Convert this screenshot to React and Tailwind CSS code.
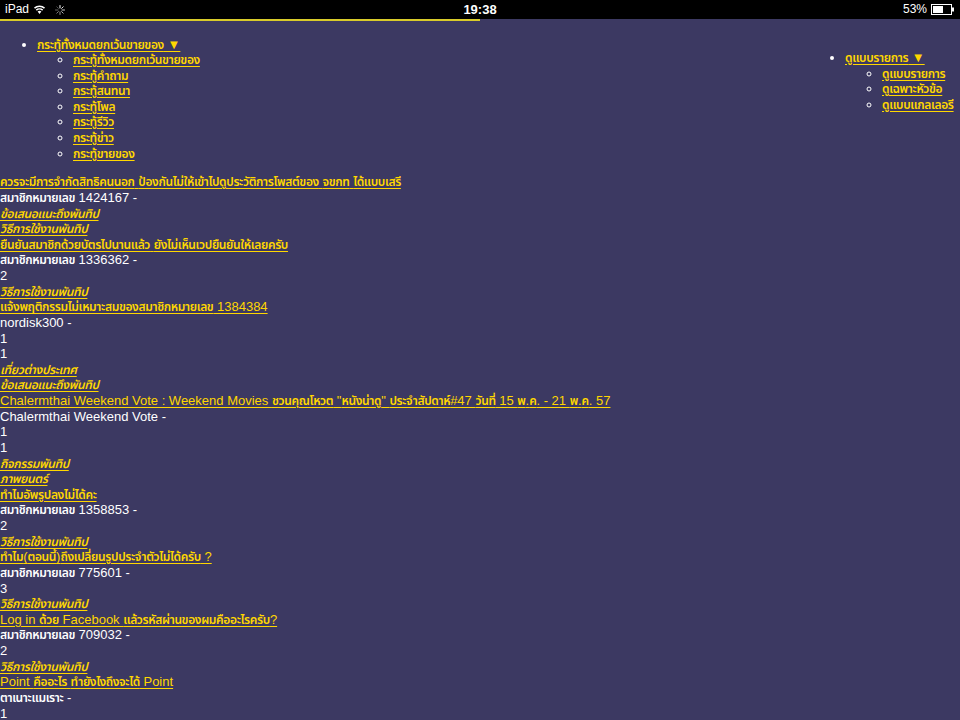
import React from "react";

const rows = [
  ["l", "ควรจะมีการจำกัดสิทธิคนนอก ป้องกันไม่ให้เข้าไปดูประวัติการโพสต์ของ จขกท ได้แบบเสรี"],
  ["t", "สมาชิกหมายเลข 1424167 -"],
  ["c", "ข้อเสนอแนะถึงพันทิป"],
  ["c", "วิธีการใช้งานพันทิป"],
  ["l", "ยืนยันสมาชิกด้วยบัตรไปนานแล้ว ยังไม่เห็นเวปยืนยันให้เลยครับ"],
  ["t", "สมาชิกหมายเลข 1336362 -"],
  ["t", "2"],
  ["c", "วิธีการใช้งานพันทิป"],
  ["l", "แจ้งพฤติกรรมไม่เหมาะสมของสมาชิกหมายเลข 1384384"],
  ["t", "nordisk300 -"],
  ["t", "1"],
  ["t", "1"],
  ["c", "เที่ยวต่างประเทศ"],
  ["c", "ข้อเสนอแนะถึงพันทิป"],
  ["l", 'Chalermthai Weekend Vote : Weekend Movies ชวนคุณโหวต "หนังน่าดู" ประจำสัปดาห์#47 วันที่ 15 พ.ค. - 21 พ.ค. 57'],
  ["t", "Chalermthai Weekend Vote -"],
  ["t", "1"],
  ["t", "1"],
  ["c", "กิจกรรมพันทิป"],
  ["c", "ภาพยนตร์"],
  ["l", "ทำไมอัพรูปลงไม่ได้คะ"],
  ["t", "สมาชิกหมายเลข 1358853 -"],
  ["t", "2"],
  ["c", "วิธีการใช้งานพันทิป"],
  ["l", "ทำไม(ตอนนี้)ถึงเปลี่ยนรูปประจำตัวไม่ได้ครับ ?"],
  ["t", "สมาชิกหมายเลข 775601 -"],
  ["t", "3"],
  ["c", "วิธีการใช้งานพันทิป"],
  ["l", "Log in ด้วย Facebook แล้วรหัสผ่านของผมคืออะไรครับ?"],
  ["t", "สมาชิกหมายเลข 709032 -"],
  ["t", "2"],
  ["c", "วิธีการใช้งานพันทิป"],
  ["l", "Point คืออะไร ทำยังไงถึงจะได้ Point"],
  ["t", "ตาเนาะแมเราะ -"],
  ["t", "1"],
];

const leftSub = [
  "กระทู้ทั้งหมดยกเว้นขายของ",
  "กระทู้คำถาม",
  "กระทู้สนทนา",
  "กระทู้โพล",
  "กระทู้รีวิว",
  "กระทู้ข่าว",
  "กระทู้ขายของ",
];
const rightSub = ["ดูแบบรายการ", "ดูเฉพาะหัวข้อ", "ดูแบบแกลเลอรี"];

function Th({ s }) {
  const parts = s.split(/([\u0E00-\u0E7F]+)/);
  return parts.map((p, i) =>
    i % 2 === 1 ? (
      <span key={i} className="font-['Noto_Sans_Thai',sans-serif] text-[12px] font-semibold leading-[15.6px] tracking-[-0.36px]">
        {p}
      </span>
    ) : (
      <React.Fragment key={i}>{p}</React.Fragment>
    )
  );
}

function Link({ s, italic }) {
  return (
    <a
      href="#"
      className={
        "text-[#ffd700] underline underline-offset-[2px] decoration-[1px] " +
        (italic ? "italic" : "")
      }
    >
      <Th s={s} />
    </a>
  );
}

function StatusBar() {
  return (
    <div className="absolute left-0 top-0 z-10 flex h-[19px] w-full items-center justify-between bg-black px-[5px] text-[12px] text-white font-['Liberation_Sans',sans-serif]">
      <div className="flex items-center gap-[5px]">
        <span>iPad</span>
        <svg width="11" height="9" viewBox="0 0 11 9" fill="white">
          <path d="M5.5 9 L3.6 6.6 A3 3 0 0 1 7.4 6.6 Z" />
          <path d="M1.8 4.6 A5.4 5.4 0 0 1 9.2 4.6 L8.2 5.7 A4 4 0 0 0 2.8 5.7 Z" />
          <path d="M0 2.6 A8 8 0 0 1 11 2.6 L10 3.7 A6.6 6.6 0 0 0 1 3.7 Z" />
        </svg>
        <svg width="10" height="10" viewBox="0 0 10 10" stroke="white" strokeWidth="1" strokeLinecap="round" className="ml-[5px]">
          <line x1="5" y1="0.5" x2="5" y2="3" opacity="1" />
          <line x1="8.2" y1="1.8" x2="6.6" y2="3.4" opacity="0.9" />
          <line x1="9.5" y1="5" x2="7" y2="5" opacity="0.8" />
          <line x1="8.2" y1="8.2" x2="6.6" y2="6.6" opacity="0.7" />
          <line x1="5" y1="9.5" x2="5" y2="7" opacity="0.6" />
          <line x1="1.8" y1="8.2" x2="3.4" y2="6.6" opacity="0.5" />
          <line x1="0.5" y1="5" x2="3" y2="5" opacity="0.4" />
          <line x1="1.8" y1="1.8" x2="3.4" y2="3.4" opacity="0.3" />
        </svg>
      </div>
      <div className="absolute left-1/2 -translate-x-1/2 text-[13px] font-bold">19:38</div>
      <div className="flex items-center gap-[4px]">
        <span>53%</span>
        <svg width="24" height="11" viewBox="0 0 24 11">
          <rect x="0.5" y="0.5" width="20" height="10" fill="none" stroke="white" strokeWidth="1" />
          <rect x="2" y="2" width="10" height="7" fill="white" />
          <rect x="21" y="3.5" width="2" height="4" fill="white" />
        </svg>
      </div>
    </div>
  );
}

export default function App() {
  return (
    <div className="relative min-h-[720px] w-[960px] overflow-hidden bg-[#3c3962] text-[13px] leading-[15.6px] text-white font-['Liberation_Sans',sans-serif]">
      <StatusBar />
      <div className="pt-[4px]">
        <div className="h-[17px] w-[480px] border-b-2 border-[#d9cb2a]"></div>
        <div className="mt-[15.5px] flex items-start justify-between">
          <ul className="list-disc pl-[37px]">
            <li className="h-[15.6px]">
              <Link s="กระทู้ทั้งหมดยกเว้นขายของ ▼" />
            </li>
            <li className="list-none">
              <ul className="list-[circle] pl-[36px]">
                {leftSub.map((s) => (
                  <li key={s} className="h-[15.6px]">
                    <Link s={s} />
                  </li>
                ))}
              </ul>
            </li>
          </ul>
          <ul className="mt-[13.5px] w-[152px] shrink-0 list-disc pl-[37px]">
            <li className="h-[15.6px]">
              <Link s="ดูแบบรายการ ▼" />
            </li>
            <li className="list-none">
              <ul className="list-[circle] pl-[37px]">
                {rightSub.map((s) => (
                  <li key={s} className="h-[15.6px]">
                    <Link s={s} />
                  </li>
                ))}
              </ul>
            </li>
          </ul>
        </div>
        <div className="mt-[13px]">
          {rows.map(([k, s], i) => (
            <div key={i} className="h-[15.64px] whitespace-nowrap">
              {k === "t" ? <Th s={s} /> : <Link s={s} italic={k === "c"} />}
            </div>
          ))}
        </div>
      </div>
    </div>
  );
}
